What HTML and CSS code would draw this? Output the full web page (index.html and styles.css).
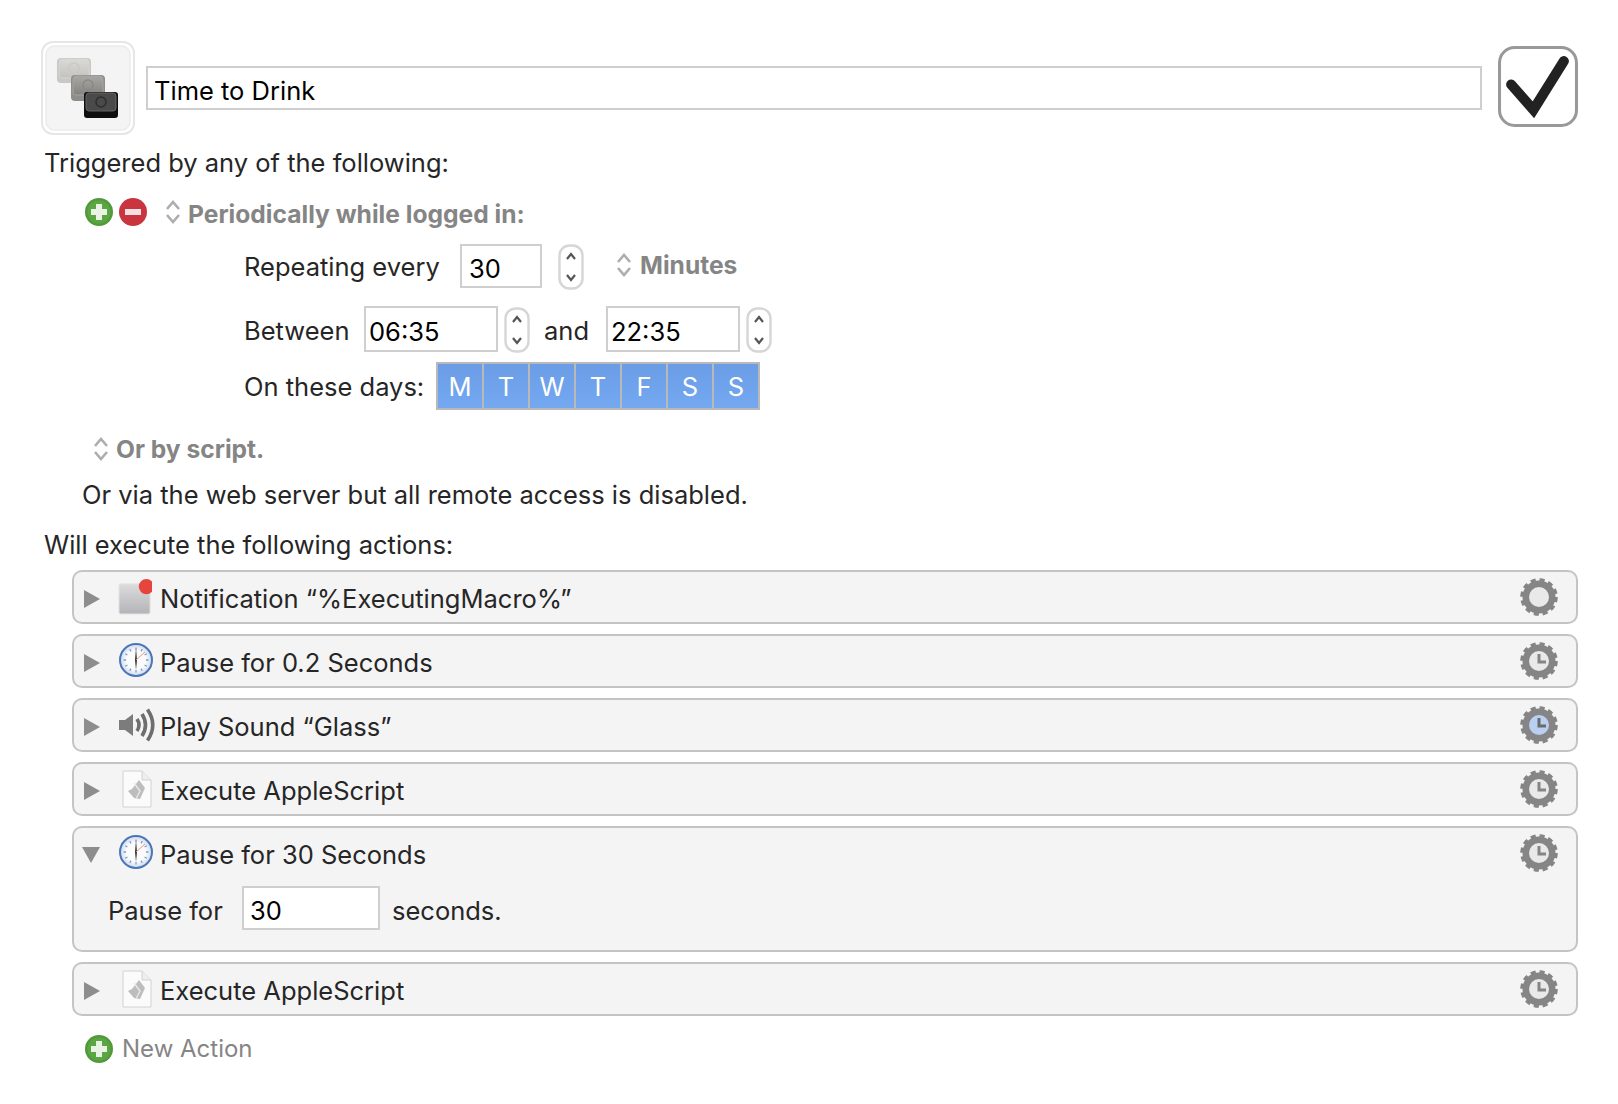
FILE: index.html
```html
<!DOCTYPE html>
<html lang="en">
<head>
    <meta charset="UTF-8">
    <title>Time to Drink</title>
    <link rel="stylesheet" href="styles.css">
</head>
<body>

<svg class="defs" width="0" height="0">
    <defs>
        <linearGradient id="noteFill" x1="0" y1="0" x2="0" y2="1">
            <stop offset="0" stop-color="#dcdcde"/>
            <stop offset="1" stop-color="#b4b4b8"/>
        </linearGradient>
        <radialGradient id="clockFace" cx="0.5" cy="0.5" r="0.5">
            <stop offset="0.6" stop-color="#fbfbfc"/>
            <stop offset="1" stop-color="#cfdaea"/>
        </radialGradient>
        <linearGradient id="keyLight" x1="0" y1="0" x2="0" y2="1">
            <stop offset="0" stop-color="#d9d9d6"/>
            <stop offset="1" stop-color="#c4c3bf"/>
        </linearGradient>
        <linearGradient id="keyMid" x1="0" y1="0" x2="0" y2="1">
            <stop offset="0" stop-color="#a9a8a4"/>
            <stop offset="1" stop-color="#84827e"/>
        </linearGradient>
        <linearGradient id="keyDark" x1="0" y1="0" x2="0" y2="1">
            <stop offset="0" stop-color="#2b2b2b"/>
            <stop offset="1" stop-color="#111"/>
        </linearGradient>
        <symbol id="stepper" viewBox="0 0 16 26">
            <path d="M2 10 L8 3 L14 10 M2 16 L8 23 L14 16" fill="none" stroke="#adadad" stroke-width="2.6"/>
        </symbol>
        <symbol id="spin" viewBox="0 0 26 46">
            <rect x="1.5" y="1.5" width="23" height="43" rx="10" fill="#fff" stroke="#d6d6d6" stroke-width="2.4"/>
            <path d="M9 15 L13 10 L17 15 M9 31 L13 36 L17 31" fill="none" stroke="#555" stroke-width="2.2"/>
        </symbol>
        <symbol id="plus" viewBox="0 0 28 28">
            <circle cx="14" cy="14" r="14" fill="#519a3a"/>
            <circle cx="14" cy="14" r="11.5" fill="#5ba544"/>
            <path d="M11 6 H17 V11 H22 V17 H17 V22 H11 V17 H6 V11 H11 Z" fill="#e9f3e4"/>
        </symbol>
        <symbol id="minus" viewBox="0 0 28 28">
            <circle cx="14" cy="14" r="14" fill="#c9353f"/>
            <rect x="6" y="11" width="16" height="6" fill="#f6dfe0"/>
        </symbol>
        <symbol id="clock" viewBox="0 0 34 34">
            <circle cx="17" cy="17" r="16" fill="url(#clockFace)" stroke="#4a76b8" stroke-width="2"/>
            <path d="M17 4.5 V7 M17 27 V29.5 M4.5 17 H7 M27 17 H29.5 M10.7 6.2 L12 8.4 M23.3 6.2 L22 8.4 M10.7 27.8 L12 25.6 M23.3 27.8 L22 25.6 M6.2 10.7 L8.4 12 M6.2 23.3 L8.4 22 M27.8 10.7 L25.6 12 M27.8 23.3 L25.6 22" stroke="#7b9fd2" stroke-width="1.3"/>
            <path d="M17 5 L18 17 L17 27 L16 17 Z" fill="#333"/>
            <path d="M17 17 L26 9" stroke="#e58b78" stroke-width="0.9"/>
        </symbol>
        <symbol id="note" viewBox="0 0 36 38">
            <rect x="1" y="5" width="33" height="32" rx="2" fill="url(#noteFill)" stroke="#e6e6e6"/>
            <circle cx="30" cy="8" r="8" fill="#e5453c"/>
        </symbol>
        <symbol id="sound" viewBox="0 0 38 34">
            <path d="M1 12 H7 L15 6 V28 L7 22 H1 Z" fill="#7c7c7c"/>
            <path d="M19 11 Q23 17 19 23 M24 6 Q31 17 24 28 M29.5 1.5 Q40 17 29.5 32.5" fill="none" stroke="#6e6e6e" stroke-width="3.6"/>
        </symbol>
        <symbol id="script" viewBox="0 0 34 38">
            <path d="M5 1 H24 L33 10 V37 H5 Z" fill="#fbfbfb" stroke="#d2d2d2"/>
            <path d="M24 1 V10 H33" fill="#eee" stroke="#d2d2d2"/>
            <path d="M21 10 L27 18 L22 29 L16 28 L10 21 L14 19 Z" fill="#bdbdbd"/>
            <path d="M16 13 L22 21 L18 29" fill="none" stroke="#e8e8e8" stroke-width="1.4"/>
        </symbol>
        <symbol id="gear" viewBox="0 0 38 38">
            <circle cx="19" cy="19" r="16.5" fill="none" stroke="#858585" stroke-width="4.6" stroke-dasharray="4.9 3.74"/>
            <circle cx="19" cy="19" r="12.5" fill="none" stroke="#858585" stroke-width="8"/>
        </symbol>
        <symbol id="keys" viewBox="0 0 94 94">
            <rect x="1" y="1" width="92" height="92" rx="11" fill="#fff" stroke="#e6e6e6" stroke-width="2"/>
            <rect x="5" y="5" width="84" height="84" rx="8" fill="#f4f4f4" stroke="#e4e4e4"/>
            <rect x="16" y="17" width="34" height="25" rx="4" fill="#c9c8c5"/>
            <rect x="18" y="18" width="30" height="19" rx="3" fill="url(#keyLight)" stroke="#d5d5d2"/>
            <circle cx="33" cy="27" r="5" fill="none" stroke="#c9c9c6" stroke-width="1.5"/>
            <rect x="30" y="34" width="34" height="26" rx="4" fill="#8f8d89"/>
            <rect x="32" y="35" width="30" height="19" rx="3" fill="url(#keyMid)" stroke="#a5a4a0"/>
            <circle cx="47" cy="44" r="5" fill="none" stroke="#8a8985" stroke-width="1.5"/>
            <rect x="43" y="51" width="34" height="26" rx="3" fill="#0f0f0f"/>
            <rect x="45" y="52" width="30" height="18" rx="3" fill="#4a4a4a" stroke="#666"/>
            <circle cx="60" cy="61" r="5" fill="none" stroke="#2e2e2e" stroke-width="1.5"/>
        </symbol>
    </defs>
</svg>

<div class="macro">
    <div class="header">
        <svg class="macro-icon"><use href="#keys"/></svg>
        <div class="field title">Time to Drink</div>
        <svg class="enabled" viewBox="0 0 79 80">
            <rect x="1.5" y="1.5" width="76" height="77" rx="15" fill="#fff" stroke="#999" stroke-width="3"/>
            <path d="M13 38 L35 63 L65 15" fill="none" stroke="#222" stroke-width="10" stroke-linecap="round"/>
        </svg>
    </div>

    <div class="heading">Triggered by any of the following:</div>

    <div class="trigger">
        <svg class="round"><use href="#plus"/></svg>
        <svg class="round"><use href="#minus"/></svg>
        <svg class="updown first"><use href="#stepper"/></svg>
        <b class="popup">Periodically while logged in:</b>
    </div>

    <div class="options">
        <div class="opt repeat">
            <span class="w-repeat">Repeating every</span>
            <div class="field num">30</div>
            <svg class="spin"><use href="#spin"/></svg>
            <svg class="updown minutes"><use href="#stepper"/></svg>
            <b class="popup">Minutes</b>
        </div>
        <div class="opt between">
            <span class="w-between">Between</span>
            <div class="field time">06:35</div>
            <svg class="spin"><use href="#spin"/></svg>
            <span class="w-and">and</span>
            <div class="field time">22:35</div>
            <svg class="spin"><use href="#spin"/></svg>
        </div>
        <div class="opt days">
            <span class="w-days">On these days:</span>
            <div class="week">
                <span>M</span><span>T</span><span>W</span><span>T</span><span>F</span><span>S</span><span>S</span>
            </div>
        </div>
    </div>

    <div class="script-line">
        <svg class="updown"><use href="#stepper"/></svg>
        <b class="popup">Or by script.</b>
    </div>
    <div class="web-line">Or via the web server but all remote access is disabled.</div>

    <div class="heading exec">Will execute the following actions:</div>

    <div class="actions">
        <div class="action">
            <div class="action-top">
                <i class="arrow"></i>
                <svg class="a-icon"><use href="#note"/></svg>
                <span class="a-name">Notification “%ExecutingMacro%”</span>
                <svg class="gear"><use href="#gear"/><circle cx="19" cy="19" r="10" fill="#e9e9e9"/></svg>
            </div>
        </div>
        <div class="action">
            <div class="action-top">
                <i class="arrow"></i>
                <svg class="a-icon clock"><use href="#clock"/></svg>
                <span class="a-name">Pause for 0.2 Seconds</span>
                <svg class="gear"><use href="#gear"/><circle cx="19" cy="19" r="10" fill="#e9e9e9"/><path d="M19 12 V20 H26" fill="none" stroke="#858585" stroke-width="3"/></svg>
            </div>
        </div>
        <div class="action">
            <div class="action-top">
                <i class="arrow"></i>
                <svg class="a-icon sound"><use href="#sound"/></svg>
                <span class="a-name">Play Sound “Glass”</span>
                <svg class="gear"><use href="#gear"/><circle cx="19" cy="19" r="10" fill="#b9d0f2"/><path d="M19 12 V20 H26" fill="none" stroke="#6b6b6b" stroke-width="3"/></svg>
            </div>
        </div>
        <div class="action">
            <div class="action-top">
                <i class="arrow"></i>
                <svg class="a-icon"><use href="#script"/></svg>
                <span class="a-name">Execute AppleScript</span>
                <svg class="gear"><use href="#gear"/><circle cx="19" cy="19" r="10" fill="#e9e9e9"/><path d="M19 12 V20 H26" fill="none" stroke="#858585" stroke-width="3"/></svg>
            </div>
        </div>
        <div class="action open">
            <div class="action-top">
                <i class="arrow down"></i>
                <svg class="a-icon clock"><use href="#clock"/></svg>
                <span class="a-name">Pause for 30 Seconds</span>
                <svg class="gear"><use href="#gear"/><circle cx="19" cy="19" r="10" fill="#e9e9e9"/><path d="M19 12 V20 H26" fill="none" stroke="#858585" stroke-width="3"/></svg>
            </div>
            <div class="action-body">
                <span class="w-pause">Pause for</span>
                <div class="field secs">30</div>
                <span>seconds.</span>
            </div>
        </div>
        <div class="action">
            <div class="action-top">
                <i class="arrow"></i>
                <svg class="a-icon"><use href="#script"/></svg>
                <span class="a-name">Execute AppleScript</span>
                <svg class="gear"><use href="#gear"/><circle cx="19" cy="19" r="10" fill="#e9e9e9"/><path d="M19 12 V20 H26" fill="none" stroke="#858585" stroke-width="3"/></svg>
            </div>
        </div>
    </div>

    <div class="new-action">
        <svg class="round"><use href="#plus"/></svg>
        <span>New Action</span>
    </div>
</div>

</body>
</html>
```

FILE: styles.css
```css
body {
    margin: 0;
    background: #fff;
    color: #262626;
    font-family: Inter, "Noto Sans", sans-serif;
    font-size: 25.5px;
    line-height: 30px;
}
.defs {
    display: block;
    height: 0;
}
svg {
    display: block;
    flex: none;
}
.macro {
    padding: 41px 40px 0 44px;
}
.header {
    display: flex;
    align-items: center;
    margin-left: -3px;
}
.macro-icon {
    width: 94px;
    height: 94px;
}
.field {
    box-sizing: border-box;
    background: #fff;
    border: 2px solid #cfcfcf;
    color: #000;
    flex: none;
}
.title {
    flex: 1;
    height: 44px;
    margin-left: 11px;
    padding: 8px 6px;
}
.enabled {
    width: 80px;
    height: 81px;
    margin-left: 16px;
    margin-top: -3px;
}
.heading {
    margin-top: 13px;
}
.trigger {
    display: flex;
    align-items: center;
    margin: 19px 0 0 41px;
    height: 30px;
}
.trigger .popup {
    padding-top: 4px;
}
.round {
    width: 28px;
    height: 28px;
    margin-right: 6px;
}
.updown {
    width: 16px;
    height: 26px;
}
.updown.first {
    margin-left: 12px;
    margin-right: 7px;
}
.popup {
    color: #858585;
    font-weight: 700;
    font-size: 24.6px;
}
.options {
    padding-left: 200px;
}
.opt {
    display: flex;
    align-items: center;
}
.repeat {
    margin-top: 17px;
    height: 46px;
}
.w-repeat {
    width: 216px;
}
.num {
    width: 82px;
    height: 44px;
    padding: 8px 7px;
    margin-top: -2px;
}
.spin {
    width: 26px;
    height: 46px;
}
.repeat .spin {
    margin-left: 16px;
}
.minutes {
    margin-left: 32px;
    margin-right: 8px;
    margin-bottom: 4px;
}
.repeat .popup {
    margin-bottom: 4px;
}
.between {
    margin-top: 16px;
    height: 46px;
}
.w-between {
    width: 120px;
    padding-top: 4px;
}
.time {
    width: 134px;
    height: 46px;
    padding: 9px 3px;
}
.between .spin {
    margin-left: 6px;
    margin-top: 2px;
}
.w-and {
    width: 62px;
    margin-left: 14px;
    padding-top: 4px;
}
.days {
    margin-top: 10px;
    height: 48px;
}
.w-days {
    width: 192px;
    padding-top: 2px;
}
.week {
    display: flex;
    border: 2px solid #b9b9b9;
    background: #b9b9b9;
    gap: 2px;
}
.week span {
    width: 44px;
    height: 44px;
    line-height: 46px;
    text-align: center;
    color: #fff;
    background: linear-gradient(#6a9de6, #74a8f1);
}
.script-line {
    display: flex;
    align-items: center;
    margin: 24px 0 0 49px;
    height: 30px;
}
.script-line .updown {
    margin-right: 7px;
}
.web-line {
    margin: 16px 0 0 38px;
}
.exec {
    margin-top: 20px;
}
.actions {
    margin: 10px 0 0 28px;
}
.action {
    box-sizing: border-box;
    background: #f4f4f4;
    border: 2px solid #c4c4c4;
    border-radius: 10px;
    margin-bottom: 10px;
}
.action-top {
    display: flex;
    align-items: center;
    height: 50px;
    padding: 0 18px 0 10px;
}
.arrow {
    flex: none;
    width: 0;
    height: 0;
    border-style: solid;
    border-width: 9px 0 9px 16px;
    border-color: transparent transparent transparent #8d8d8d;
    margin-top: 4px;
    margin-right: 18px;
}
.arrow.down {
    border-width: 16px 9px 0 9px;
    border-color: #8d8d8d transparent transparent transparent;
    margin-left: -2px;
    margin-right: 18px;
}
.a-icon {
    width: 34px;
    height: 38px;
}
.a-icon.sound {
    width: 38px;
    margin-right: -4px;
}
.a-icon.clock {
    margin-left: 1px;
    margin-right: -1px;
    margin-top: -3px;
}
.a-name {
    margin-left: 8px;
    flex: 1;
    padding-top: 3px;
}
.gear {
    width: 38px;
    height: 38px;
}
.action-body {
    display: flex;
    align-items: center;
    height: 72px;
    padding: 0 0 6px 34px;
    box-sizing: border-box;
}
.w-pause {
    width: 134px;
}
.secs {
    width: 138px;
    height: 44px;
    padding: 8px 6px;
    margin-right: 12px;
    margin-bottom: 6px;
}
.new-action {
    display: flex;
    align-items: center;
    margin: 18px 0 0 41px;
    color: #858585;
    font-size: 24px;
}
.new-action .round {
    margin-right: 9px;
}
```
